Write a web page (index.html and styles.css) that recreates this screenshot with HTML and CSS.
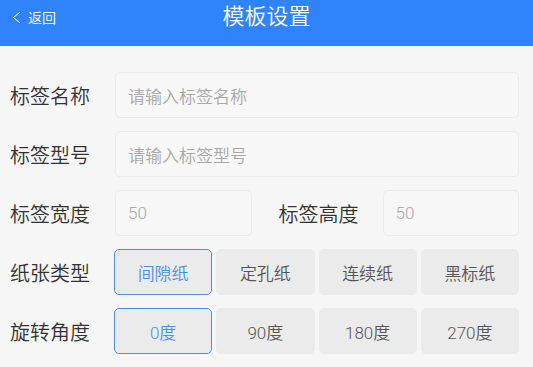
FILE: index.html
```html
<!DOCTYPE html>
<html lang="zh-CN">
<head>
<meta charset="utf-8">
<title>模板设置</title>
<link rel="stylesheet" href="styles.css">
</head>
<body>
<header class="topbar">
  <div class="back">
    <svg class="chev" width="9" height="13" viewBox="0 0 9 13"><path d="M8 1 L1.5 6.5 L8 12" fill="none" stroke="#fff" stroke-width="1"/></svg>
    <span>返回</span>
  </div>
  <div class="title">模板设置</div>
  <div></div>
</header>
<main class="form">
  <div class="row">
    <label class="label">标签名称</label>
    <div class="input placeholder">请输入标签名称</div>
  </div>
  <div class="row">
    <label class="label">标签型号</label>
    <div class="input placeholder">请输入标签型号</div>
  </div>
  <div class="row row-split">
    <label class="label">标签宽度</label>
    <div class="input placeholder">50</div>
    <label class="label label2">标签高度</label>
    <div class="input placeholder">50</div>
  </div>
  <div class="row row-opts">
    <label class="label">纸张类型</label>
    <div class="opts">
      <div class="opt active">间隙纸</div>
      <div class="opt">定孔纸</div>
      <div class="opt">连续纸</div>
      <div class="opt">黑标纸</div>
    </div>
  </div>
  <div class="row row-opts">
    <label class="label">旋转角度</label>
    <div class="opts">
      <div class="opt active">0度</div>
      <div class="opt">90度</div>
      <div class="opt">180度</div>
      <div class="opt">270度</div>
    </div>
  </div>
</main>
</body>
</html>
```
FILE: styles.css
```css
* { box-sizing: border-box; }
html, body { margin: 0; padding: 0; }
body {
  background: #f6f6f6;
  font-family: Roboto, "Noto Sans CJK SC", sans-serif;
  font-weight: 350;
  color: #333;
  width: 533px;
  height: 367px;
  overflow: hidden;
}
.topbar {
  height: 46px;
  background: #3084fb;
  color: #fff;
  display: grid;
  grid-template-columns: 1fr auto 1fr;
  align-items: start;
  padding: 0 10px;
}
.back {
  display: flex;
  align-items: center;
  gap: 7px;
  height: 33px;
  font-size: 14px;
  padding-left: 2px;
}
.back .chev { display: block; margin-top: 1px; }
.title {
  height: 33px;
  line-height: 33px;
  font-size: 22px;
}
.form {
  padding: 26px 14px 0 10px;
  display: flex;
  flex-direction: column;
  gap: 13px;
}
.row {
  display: grid;
  grid-template-columns: 105px 1fr;
  height: 46px;
  align-items: stretch;
}
.row-split { grid-template-columns: 105px 1fr 131px 1fr; }
.row-opts { grid-template-columns: 104px 1fr; }
.label {
  font-size: 20px;
  color: #333;
  display: flex;
  align-items: center;
}
.label2 { padding-left: 27px; }
.input {
  border: 1px solid #ebebeb;
  border-radius: 5px;
  background: #f7f7f7;
  display: flex;
  align-items: center;
  padding-left: 12px;
  font-size: 17px;
}
.placeholder { color: #a8a8a8; }
.opts {
  display: grid;
  grid-template-columns: repeat(4, 1fr);
  gap: 4px;
}
.opt {
  background: #ebebeb;
  border: 1px solid #ebebeb;
  border-radius: 5px;
  display: flex;
  align-items: center;
  justify-content: center;
  font-size: 17px;
  color: #555;
}
.opt.active {
  border-color: #4c8fea;
  color: #4c8fea;
}
```
